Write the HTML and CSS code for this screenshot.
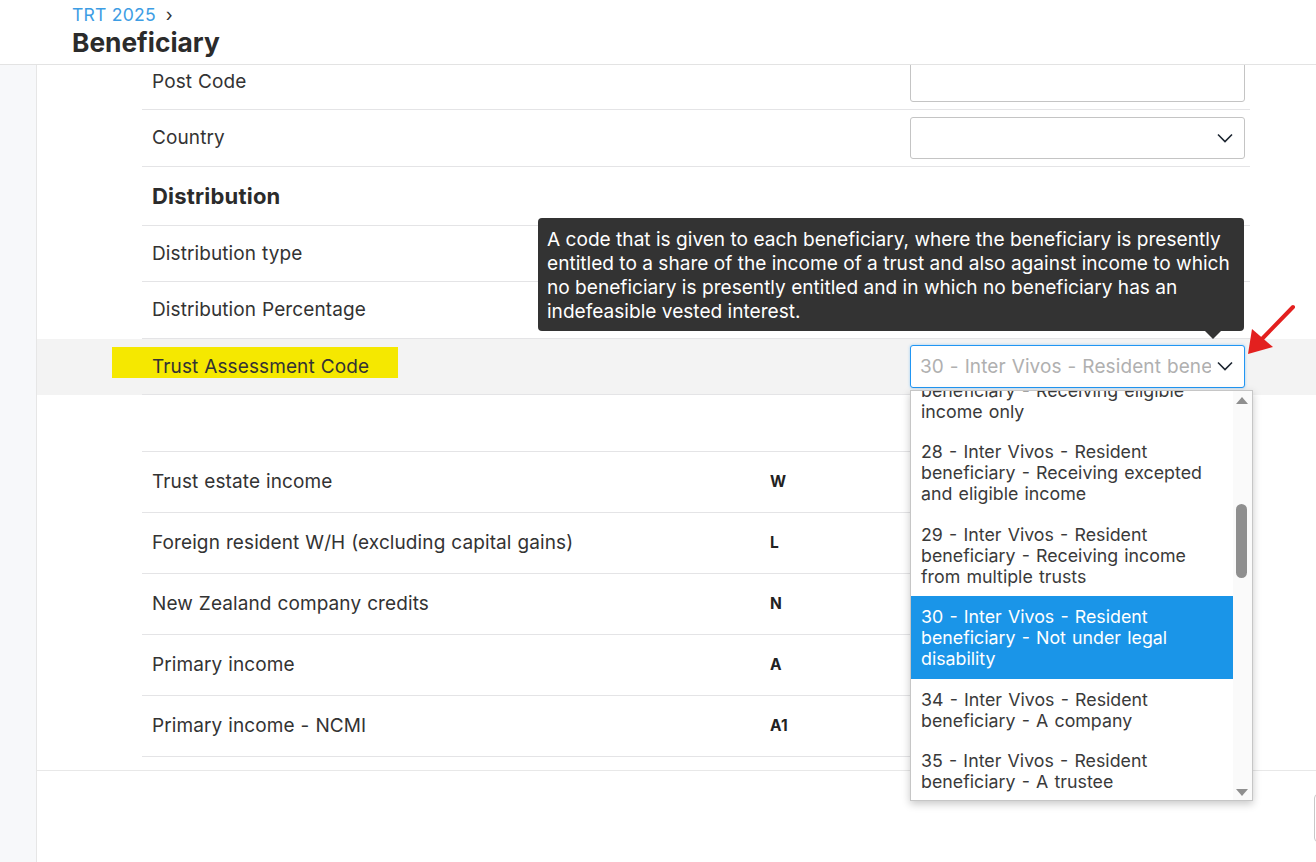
FILE: index.html
```html
<!DOCTYPE html>
<html lang="en">
<head>
  <meta charset="UTF-8">
  <meta name="viewport" content="width=device-width, initial-scale=1.0">
  <title>Beneficiary</title>
  <link rel="stylesheet" href="styles.css">
</head>
<body>
  <header class="page-header">
    <div class="breadcrumb">
      <a href="#" class="crumb-link">TRT 2025</a>
      <span class="crumb-sep">&rsaquo;</span>
    </div>
    <h1 class="page-title">Beneficiary</h1>
  </header>

  <div class="layout">
    <aside class="sidebar"></aside>

    <main class="content">
      <div class="form-scroll">
        <section class="form-section">
          <div class="row">
            <div class="row-inner">
              <div class="label">Post Code</div>
              <div class="code"></div>
              <div class="field"><input type="text" class="text-input"></div>
            </div>
          </div>

          <div class="row">
            <div class="row-inner">
              <div class="label">Country</div>
              <div class="code"></div>
              <div class="field">
                <div class="select">
                  <span class="select-value"></span>
                  <svg class="chevron" width="16" height="10" viewBox="0 0 16 10" fill="none" stroke="currentColor" stroke-width="1.6">
                    <path d="M1 1.5l7 7 7-7"></path>
                  </svg>
                </div>
              </div>
            </div>
          </div>

          <div class="row row-heading">
            <div class="row-inner">
              <div class="label section-title">Distribution</div>
            </div>
          </div>

          <div class="row">
            <div class="row-inner">
              <div class="label">Distribution type</div>
              <div class="code"></div>
              <div class="field"></div>
            </div>
          </div>

          <div class="row">
            <div class="row-inner">
              <div class="label">Distribution Percentage</div>
              <div class="code"></div>
              <div class="field"></div>
            </div>
          </div>

          <!-- focused row -->
          <div class="row row-active">
            <div class="row-inner">
              <div class="label"><span class="marker">Trust Assessment Code</span></div>
              <div class="code"></div>
              <div class="field">
                <div class="select-wrap">
                  <div class="tooltip">
                    A code that is given to each beneficiary, where the beneficiary is presently
                    entitled to a share of the income of a trust and also against income to which
                    no beneficiary is presently entitled and in which no beneficiary has an
                    indefeasible vested interest.
                  </div>

                  <svg class="annotation-arrow" width="60" height="62" viewBox="0 0 60 62">
                    <path d="M50 4L17 38" stroke="#e3201f" stroke-width="4" stroke-linecap="round"></path>
                    <path d="M5 51L9 26L30 44Z" fill="#e3201f"></path>
                  </svg>

                  <div class="select select-open">
                    <span class="select-value placeholder">30 - Inter Vivos - Resident beneficiary - Not under legal disability</span>
                    <svg class="chevron" width="16" height="10" viewBox="0 0 16 10" fill="none" stroke="currentColor" stroke-width="1.6">
                      <path d="M1 1.5l7 7 7-7"></path>
                    </svg>
                  </div>

                  <div class="dropdown">
                    <div class="dropdown-list">
                      <div class="option">27 - Inter Vivos - Resident beneficiary - Receiving eligible income only</div>
                      <div class="option">28 - Inter Vivos - Resident beneficiary - Receiving excepted and eligible income</div>
                      <div class="option">29 - Inter Vivos - Resident beneficiary - Receiving income from multiple trusts</div>
                      <div class="option selected">30 - Inter Vivos - Resident beneficiary - Not under legal disability</div>
                      <div class="option">34 - Inter Vivos - Resident beneficiary - A company</div>
                      <div class="option">35 - Inter Vivos - Resident beneficiary - A trustee</div>
                      <div class="option">36 - Inter Vivos - Resident beneficiary - Under legal disability</div>
                    </div>
                    <div class="scrollbar">
                      <span class="scroll-arrow up"></span>
                      <span class="scroll-thumb"></span>
                      <span class="scroll-arrow down"></span>
                    </div>
                  </div>
                </div>
              </div>
            </div>
          </div>

          <div class="row">
            <div class="row-inner">
              <div class="label"></div>
            </div>
          </div>

          <div class="row row-tall">
            <div class="row-inner">
              <div class="label">Trust estate income</div>
              <div class="code">W</div>
              <div class="field"><input type="text" class="text-input"></div>
            </div>
          </div>

          <div class="row row-tall">
            <div class="row-inner">
              <div class="label">Foreign resident W/H (excluding capital gains)</div>
              <div class="code">L</div>
              <div class="field"><input type="text" class="text-input"></div>
            </div>
          </div>

          <div class="row row-tall">
            <div class="row-inner">
              <div class="label">New Zealand company credits</div>
              <div class="code">N</div>
              <div class="field"><input type="text" class="text-input"></div>
            </div>
          </div>

          <div class="row row-tall">
            <div class="row-inner">
              <div class="label">Primary income</div>
              <div class="code">A</div>
              <div class="field"><input type="text" class="text-input"></div>
            </div>
          </div>

          <div class="row row-tall">
            <div class="row-inner">
              <div class="label">Primary income - NCMI</div>
              <div class="code">A1</div>
              <div class="field"><input type="text" class="text-input"></div>
            </div>
          </div>
        </section>

        <div class="form-footer">
          <button class="footer-button"></button>
        </div>
      </div>
    </main>
  </div>
</body>
</html>
```

FILE: styles.css
```css
body {
  font-family: Inter, 'Noto Sans', sans-serif;
  margin: 0;
  padding: 0;
  background-color: #ffffff;
  color: #333333;
  height: 862px;
  overflow: hidden;
}

.page-header {
  height: 64px;
  padding: 0 72px;
  border-bottom: 1px solid #e3e3e3;
  box-sizing: content-box;
  background-color: white;
  position: relative;
  z-index: 2;
}

.breadcrumb {
  display: flex;
  align-items: center;
  padding-top: 2px;
  height: 24px;
  font-size: 17.6px;
}

.crumb-link {
  color: #3d9de4;
  text-decoration: none;
  letter-spacing: 0.2px;
}

.crumb-sep {
  margin-left: 10px;
  color: #333;
  font-size: 18px;
}

.page-title {
  margin: 0;
  font-size: 26.3px;
  font-weight: 700;
  color: #2b2b2b;
  line-height: 33px;
}

.layout {
  display: flex;
  height: 797px;
}

.sidebar {
  width: 36px;
  flex-shrink: 0;
  background-color: #f7f8fa;
  border-right: 1px solid #e6e6e6;
}

.content {
  flex: 1;
  overflow: hidden;
}

.form-scroll {
  margin-top: -11.5px;
}

.form-section {
  border-bottom: 1px solid #e8e8e8;
  padding-bottom: 13px;
}

.row-inner {
  display: grid;
  grid-template-columns: 1fr 140px 335px;
  align-items: center;
  height: 55.5px;
  margin: 0 66px 0 105px;
  padding: 0 5px 0 10px;
  border-bottom: 1px solid #e4e4e6;
  font-size: 19px;
  letter-spacing: 0.1px;
  word-spacing: 0.5px;
}

.row-tall .row-inner {
  height: 60px;
}

.row-heading .row-inner {
  height: 58px;
}

.row-active {
  background-color: #f3f3f3;
}

.section-title {
  font-size: 22px;
  font-weight: 700;
  color: #2b2b2b;
  letter-spacing: 0.2px;
}

.marker {
  background-color: #f5e800;
  padding: 8px 29px 0 40px;
  margin-left: -40px;
}

.code {
  font-size: 15.5px;
  font-weight: 700;
  color: #222;
}

.field {
  position: relative;
}

.text-input {
  display: block;
  width: 100%;
  height: 42px;
  box-sizing: border-box;
  border: 1px solid #c4c4c4;
  border-radius: 3px;
  background: white;
}

.select {
  display: flex;
  align-items: center;
  height: 42px;
  box-sizing: border-box;
  padding: 0 11px 0 9px;
  border: 1px solid #c4c4c4;
  border-radius: 3px;
  background: white;
  color: #1c2530;
}

.select-value {
  flex: 1;
  overflow: hidden;
  white-space: nowrap;
  font-size: 19px;
}

.placeholder {
  color: #b0b0b0;
}

.chevron {
  flex-shrink: 0;
  margin-left: 6px;
}

.select-wrap {
  position: relative;
}

.select-open {
  height: 43px;
  border-color: #2196f3;
  box-shadow: 0 0 3px rgba(33, 150, 243, 0.4);
}

.tooltip {
  position: absolute;
  right: 1px;
  bottom: calc(100% + 14px);
  width: 706px;
  box-sizing: border-box;
  padding: 9px 2px 8px 9px;
  background-color: #333333;
  color: white;
  border-radius: 4px;
  font-size: 19.1px;
  line-height: 24px;
  letter-spacing: 0;
  word-spacing: 0;
  z-index: 3;
}

.tooltip::after {
  content: '';
  position: absolute;
  right: 23px;
  bottom: -8px;
  border-left: 8px solid transparent;
  border-right: 8px solid transparent;
  border-top: 8px solid #333333;
}

.annotation-arrow {
  position: absolute;
  left: 333px;
  top: -42px;
  z-index: 4;
}

.dropdown {
  position: absolute;
  top: calc(100% + 2px);
  left: 0;
  width: 343px;
  height: 411px;
  box-sizing: border-box;
  display: flex;
  background: white;
  border: 1px solid #c6c6c6;
  box-shadow: 0 3px 8px rgba(0, 0, 0, 0.22);
  overflow: hidden;
  z-index: 3;
  letter-spacing: 0;
}

.dropdown-list {
  flex: 1;
  margin-top: -42px;
}

.option {
  padding: 10px 10px 9.5px;
  font-size: 17.8px;
  line-height: 21px;
  color: #3a3a3a;
  word-spacing: 1.2px;
}

.option.selected {
  background-color: #1a95e8;
  color: white;
}

.scrollbar {
  width: 19px;
  flex-shrink: 0;
  background-color: #fafafa;
  position: relative;
}

.scroll-arrow {
  position: absolute;
  left: 3px;
  width: 0;
  height: 0;
  border-left: 6px solid transparent;
  border-right: 6px solid transparent;
}

.scroll-arrow.up {
  top: 6px;
  border-bottom: 7px solid #8f8f8f;
}

.scroll-arrow.down {
  bottom: 4px;
  border-top: 7px solid #8f8f8f;
}

.scroll-thumb {
  position: absolute;
  left: 3px;
  top: 113px;
  width: 11px;
  height: 74px;
  border-radius: 6px;
  background-color: #8f8f8f;
}

.form-footer {
  display: flex;
  justify-content: flex-end;
  padding-top: 23px;
}

.footer-button {
  width: 60px;
  height: 48px;
  margin-right: -58px;
  border: 1px solid #c8c8c8;
  border-radius: 4px;
  background: white;
}
```
